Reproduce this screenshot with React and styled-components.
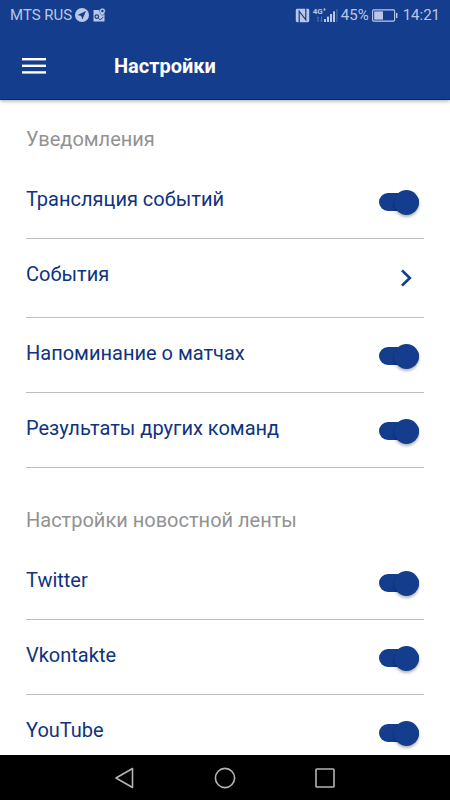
import React, { useState } from 'react'
import styled, { createGlobalStyle } from 'styled-components'

const App = () => {
  const [enabled, setEnabled] = useState({
    live: true,
    reminders: true,
    results: true,
    twitter: true,
    vkontakte: true,
    youtube: true,
  })
  const toggle = (id) => setEnabled((prev) => ({ ...prev, [id]: !prev[id] }))

  return (
    <Screen>
      <GlobalStyle />
      <TopArea>
        <StatusBar />
        <Toolbar>
          <MenuButton type="button" aria-label="Меню">
            <svg width="24" height="18" viewBox="0 0 24 18" fill="currentColor" aria-hidden="true">
              <rect y="1" width="24" height="2.4" />
              <rect y="7.6" width="24" height="2.4" />
              <rect y="14.2" width="24" height="2.4" />
            </svg>
          </MenuButton>
          <Title>Настройки</Title>
        </Toolbar>
      </TopArea>
      <Content>
        <Section>
          <SectionTitle>Уведомления</SectionTitle>
          <ToggleRow id="live" label="Трансляция событий" checked={enabled.live} onToggle={toggle} />
          <LinkRow href="#events">
            <Label as="span">События</Label>
            <svg width="14" height="18" viewBox="0 0 14 18" fill="none" stroke="currentColor" strokeWidth="2.7" aria-hidden="true">
              <path d="M2 1.4 9.8 9 2 16.6" />
            </svg>
          </LinkRow>
          <ToggleRow id="reminders" label="Напоминание о матчах" checked={enabled.reminders} onToggle={toggle} />
          <ToggleRow id="results" label="Результаты других команд" checked={enabled.results} onToggle={toggle} />
        </Section>
        <Section>
          <SectionTitle>Настройки новостной ленты</SectionTitle>
          <ToggleRow id="twitter" label="Twitter" checked={enabled.twitter} onToggle={toggle} />
          <ToggleRow id="vkontakte" label="Vkontakte" checked={enabled.vkontakte} onToggle={toggle} />
          <ToggleRow id="youtube" label="YouTube" checked={enabled.youtube} onToggle={toggle} />
        </Section>
      </Content>
      <NavBar>
        <NavButton type="button" aria-label="Назад">
          <svg width="22" height="22" viewBox="0 0 22 22" aria-hidden="true">
            <path d="M18.5 1.5v19L2 11z" />
          </svg>
        </NavButton>
        <NavButton type="button" aria-label="Домой">
          <svg width="22" height="22" viewBox="0 0 22 22" aria-hidden="true">
            <circle cx="11" cy="11" r="9.6" />
          </svg>
        </NavButton>
        <NavButton type="button" aria-label="Недавние">
          <svg width="22" height="22" viewBox="0 0 22 22" aria-hidden="true">
            <rect x="2" y="2" width="18" height="18" rx="0.8" />
          </svg>
        </NavButton>
      </NavBar>
    </Screen>
  )
}

export default App

const ToggleRow = ({ id, label, checked, onToggle }) => (
  <Row>
    <Label htmlFor={id}>{label}</Label>
    <Switch id={id} type="checkbox" checked={checked} onChange={() => onToggle(id)} />
  </Row>
)

const StatusBar = () => (
  <Status>
    <StatusGroup>
      <span>MTS RUS</span>
      <svg width="14" height="14" viewBox="0 0 14 14" aria-hidden="true">
        <circle cx="7" cy="7" r="7" fill="currentColor" />
        <path d="M11 3 2.6 7l3.6.9L7.4 11.4z" fill="#143d8d" />
      </svg>
      <svg width="14" height="14" viewBox="0 0 14 14" aria-hidden="true">
        <path d="M1.5 2h6c0 2 1.3 3.4 3 5.2L12.5 6v7.4h-11z" fill="currentColor" />
        <circle cx="4.8" cy="8.6" r="1.8" fill="none" stroke="#143d8d" strokeWidth="1.2" />
        <path d="m6.2 10 2 1.8 3.2-2.6" fill="none" stroke="#143d8d" />
        <path d="M10.4.2a2.9 2.9 0 0 1 2.9 2.9c0 1.9-2.9 4.9-2.9 4.9S7.5 5 7.5 3.1A2.9 2.9 0 0 1 10.4.2z" fill="currentColor" stroke="#143d8d" strokeWidth="0.4" />
        <circle cx="10.4" cy="3" r="1.2" fill="#143d8d" />
      </svg>
    </StatusGroup>
    <StatusGroup>
      <svg width="15" height="15" viewBox="0 0 15 15" aria-hidden="true">
        <rect x="0.8" y="0.8" width="13.4" height="13.4" rx="1.4" fill="currentColor" />
        <path d="M4.2 12.2V3.2l6.6 8.6V2.8" fill="none" stroke="#143d8d" strokeWidth="1.2" />
        <path d="M4.2 15v-3M10.8 0v3" stroke="#143d8d" strokeWidth="1.2" />
      </svg>
      <Signal>
        <NetworkType>4G⁺</NetworkType>
        <svg width="25" height="15" viewBox="0 0 25 15" fill="currentColor" aria-hidden="true">
          <path d="m3.5 10 1.5-1.6L6.5 10H5.5v4h-1v-4zM7 12.4h1V8.6h1v3.8h1L8.5 14z" opacity="0.4" />
          <rect x="11" y="11" width="2" height="3" />
          <rect x="14" y="8.6" width="2" height="5.4" />
          <rect x="17" y="6" width="2" height="8" />
          <rect x="20" y="3.4" width="2" height="10.6" />
          <rect x="23" y="1" width="1.6" height="13" opacity="0.25" />
        </svg>
      </Signal>
      <span>45%</span>
      <svg width="26" height="13" viewBox="0 0 26 13" fill="none" stroke="currentColor" aria-hidden="true">
        <rect x="0.6" y="0.9" width="22" height="11.2" rx="1" strokeWidth="1.1" />
        <rect x="2.2" y="2.4" width="8.8" height="8.2" fill="currentColor" stroke="none" />
        <path d="M24.7 4v5" strokeWidth="1.5" />
      </svg>
      <Clock>14:21</Clock>
    </StatusGroup>
  </Status>
)

const GlobalStyle = createGlobalStyle`
  * {
    box-sizing: border-box;
  }
  body {
    margin: 0;
    background: #fff;
    font-family: Roboto, "Liberation Sans", sans-serif;
  }
`

const Screen = styled.div`
  display: flex;
  flex-direction: column;
  height: 100vh;
`

const TopArea = styled.header`
  position: relative;
  flex-shrink: 0;
  background: #143d8d;
  color: #fff;
  border-bottom: 1px solid #0a2878;
  box-shadow: 0 1px 4px rgba(0, 0, 0, 0.35);
`

const Status = styled.div`
  display: flex;
  justify-content: space-between;
  align-items: center;
  height: 30px;
  padding: 0 10px;
  color: #b9c8e8;
  font-size: 15px;
  line-height: 20px;
`

const StatusGroup = styled.div`
  display: flex;
  align-items: center;
  gap: 3px;
`

const Signal = styled.div`
  position: relative;
  display: flex;
`

const NetworkType = styled.span`
  position: absolute;
  top: 0;
  left: 0;
  font-size: 8px;
  font-weight: 700;
  line-height: 8px;
`

const Clock = styled.time`
  margin-left: 2px;
`

const Toolbar = styled.div`
  display: flex;
  align-items: center;
  gap: 60px;
  height: 69px;
  padding: 2px 14px 0;
`

const MenuButton = styled.button`
  display: flex;
  padding: 8px;
  border: none;
  background: none;
  color: inherit;
  cursor: pointer;
`

const Title = styled.h1`
  margin: 0;
  font-size: 20px;
  font-weight: 700;
  line-height: 24px;
`

const Content = styled.main`
  flex: 1;
  min-height: 0;
  padding: 0 26px;
  overflow-y: auto;
  scrollbar-width: none;
`

const Section = styled.section`
  padding-top: 27px;

  & + & {
    padding-top: 40px;
  }
`

const SectionTitle = styled.h2`
  margin: 0 0 13px;
  color: #929292;
  font-size: 20px;
  font-weight: 400;
  line-height: 24px;
`

const Row = styled.div`
  display: flex;
  justify-content: space-between;
  align-items: flex-start;
  padding: 23px 5px 27px 0;
  border-bottom: 1px solid #bdbdbd;
`

const LinkRow = styled(Row).attrs({ as: 'a' })`
  padding: 23px 10px 27px 0;
  color: #143d8d;
  text-decoration: none;

  svg {
    margin: 7px 0 3px;
  }
`

const Label = styled.label`
  color: #0f3380;
  font-size: 20px;
  line-height: 24px;
`

const Switch = styled.input`
  appearance: none;
  display: flex;
  align-items: center;
  width: 40px;
  height: 18px;
  margin: 6px 0 0;
  border-radius: 9px;
  background: ${({ checked }) => (checked ? '#143d8d' : '#b5b5b5')};
  cursor: pointer;

  &::before {
    content: '';
    flex-shrink: 0;
    width: 25px;
    height: 25px;
    margin-left: ${({ checked }) => (checked ? 'auto' : '0')};
    border-radius: 50%;
    background: ${({ checked }) => (checked ? '#143d8d' : '#f5f5f5')};
    box-shadow: 0 2px 3px rgba(0, 0, 0, 0.3);
  }
`

const NavBar = styled.nav`
  display: flex;
  justify-content: center;
  align-items: center;
  gap: 62px;
  flex-shrink: 0;
  height: 45px;
  background: #000;
`

const NavButton = styled.button`
  display: flex;
  padding: 8px;
  border: none;
  background: none;
  cursor: pointer;

  svg {
    fill: none;
    stroke: #b4b4b4;
    stroke-width: 1.6;
    stroke-linejoin: round;
  }
`
